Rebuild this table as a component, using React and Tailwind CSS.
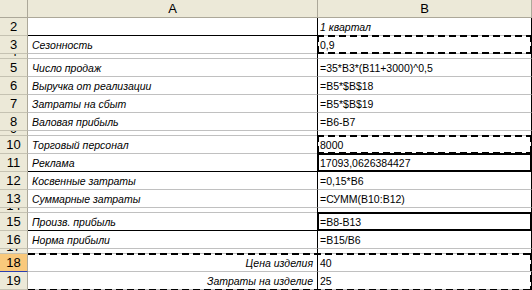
import React from "react";

const rows = [
  { n: 2, a: "", b: "1 квартал", bItalic: true, aLine: "black" },
  { n: 3, a: "Сезонность", b: "0,9", marquee: true },
  { n: 4, hidden: true },
  { n: 5, a: "Число продаж", b: "=35*B3*(B11+3000)^0,5" },
  { n: 6, a: "Выручка от реализации", b: "=B5*$B$18" },
  { n: 7, a: "Затраты на сбыт", b: "=B5*$B$19" },
  { n: 8, a: "Валовая прибыль", b: "=B6-B7" },
  { n: 9, hidden: true },
  { n: 10, a: "Торговый персонал", b: "8000", marquee: true },
  { n: 11, a: "Реклама", b: "17093,0626384427", box: true, aLine: "black" },
  { n: 12, a: "Косвенные затраты", b: "=0,15*B6" },
  { n: 13, a: "Суммарные затраты", b: "=СУММ(B10:B12)" },
  { n: 14, hidden: true },
  { n: 15, a: "Произв. прибыль", b: "=B8-B13", box: true, aLine: "black" },
  { n: 16, a: "Норма прибыли", b: "=B15/B6" },
  { n: 17, hidden: true },
];

const tail = [
  { n: 18, a: "Цена изделия", b: "40", selected: true },
  { n: 19, a: "Затраты на изделие", b: "25" },
];

// copy marquee ("marching ants") drawn over a cell or range
const Marquee = ({ className = "", sides = "tblr" }) => (
  <div className={`pointer-events-none absolute ${className}`}>
    {sides.includes("t") && (
      <div className="absolute left-0 right-0 top-0 h-[2px] bg-[repeating-linear-gradient(90deg,#000_0_7px,transparent_7px_11px)]" />
    )}
    {sides.includes("b") && (
      <div className="absolute left-0 right-0 bottom-0 h-[2px] bg-[repeating-linear-gradient(90deg,#000_0_7px,transparent_7px_11px)]" />
    )}
    {sides.includes("l") && (
      <div className="absolute top-0 bottom-0 left-0 w-[2px] bg-[repeating-linear-gradient(180deg,#000_0_7px,transparent_7px_11px)]" />
    )}
    {sides.includes("r") && (
      <div className="absolute top-0 bottom-0 right-0 w-[2px] bg-[repeating-linear-gradient(180deg,#000_0_7px,transparent_7px_11px)]" />
    )}
  </div>
);

const RowHead = ({ n, hidden, selected }) => (
  <div
    className={`w-[28px] shrink-0 border-r border-b border-r-[#aca899] overflow-hidden flex justify-center text-[13px] leading-[15px] ${
      selected ? "bg-[#f9c97c] border-b-[#2a3fb0]" : "bg-[#ece9d8] border-b-[#c5c2b2]"
    } ${hidden ? "h-[5px] items-start" : "h-[18px] items-center"}`}
  >
    {hidden ? (
      <span className="block h-[4px] overflow-hidden leading-[4px]">
        <span className="block -translate-y-[10px] leading-[15px]">{n}</span>
      </span>
    ) : (
      <span>{n}</span>
    )}
  </div>
);

const Row = ({ r }) => {
  if (r.hidden) {
    return (
      <div className="flex">
        <RowHead n={r.n} hidden />
        <div className="w-[289px] h-[5px] border-b border-[#c0c0c0]" />
        <div className="flex-1 h-[5px] border-b border-b-[#c0c0c0] border-l border-r border-l-black border-r-black" />
      </div>
    );
  }
  return (
    <div className="flex">
      <RowHead n={r.n} selected={r.selected} />
      <div
        className={`w-[289px] h-[18px] border-b flex items-end pb-[1px] px-[4px] italic ${
          r.aLine === "black" ? "border-black" : "border-[#c0c0c0]"
        } ${r.right ? "justify-end" : ""}`}
      >
        <span className="leading-[13px] whitespace-nowrap">{r.a}</span>
      </div>
      <div className="relative flex-1 h-[18px] border-b border-b-[#c0c0c0] border-l border-r border-l-black border-r-black flex items-end pb-[1px] px-[2px]">
        <span className={`leading-[13px] whitespace-nowrap ${r.bItalic ? "italic" : ""}`}>{r.b}</span>
        {r.marquee && <Marquee className="-top-[1px] -left-[1px] -right-[1px] bottom-[-1px]" />}
        {r.box && <div className="pointer-events-none absolute -top-[1px] -left-[1px] -right-[1px] bottom-[-1px] border-2 border-black" />}
      </div>
    </div>
  );
};

export default function App() {
  return (
    <div className="w-[532px] h-[290px] overflow-hidden bg-white text-black text-[10.5px] font-['Liberation_Sans',Arial,sans-serif]">
      <div className="flex h-[18px] bg-[#ece9d8] border-b border-[#aca899] text-[13px]">
        <div className="w-[28px] border-r border-[#aca899]" />
        <div className="w-[290px] border-r border-[#aca899] flex items-end justify-center leading-[15px] pb-[1px]">A</div>
        <div className="flex-1 border-r border-[#aca899] flex items-end justify-center leading-[15px] pb-[1px]">B</div>
      </div>
      {rows.map((r) => (
        <Row key={r.n} r={r} />
      ))}
      <div className="relative">
        {tail.map((r) => (
          <Row key={r.n} r={{ ...r, right: true }} />
        ))}
        <Marquee className="-top-[1px] left-[28px] right-0 bottom-[-1px]" sides="tbr" />
      </div>
    </div>
  );
}
